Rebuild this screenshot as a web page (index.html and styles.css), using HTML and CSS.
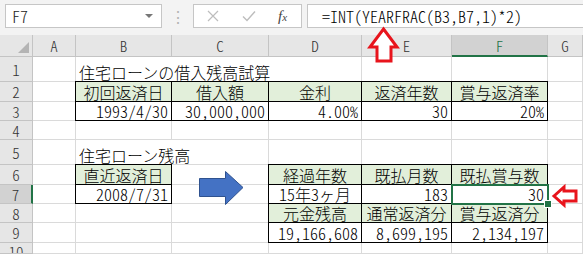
FILE: index.html
```html
<!DOCTYPE html>
<html lang="ja">
<head>
    <meta charset="UTF-8">
    <title>住宅ローン残高</title>
    <link rel="stylesheet" href="styles.css">
</head>
<body>

    <!-- Formula bar -->
    <div class="topbar">
        <div class="namebox"><span>F7</span><span class="caret"></span></div>
        <div class="dots">⋮</div>
        <div class="fxbox">
            <svg class="ico" width="12" height="12" viewBox="0 0 12 12"><path d="M1 1 L11 11 M11 1 L1 11" stroke="#bdbdbd" stroke-width="1.2" fill="none"/></svg>
            <svg class="ico" width="14" height="12" viewBox="0 0 14 12"><path d="M1 6.5 L5 10.5 L13 1.5" stroke="#bdbdbd" stroke-width="1.4" fill="none"/></svg>
            <span class="fx">f<small>x</small></span>
        </div>
        <div class="formula">=INT(YEARFRAC(B3,B7,1)*2)</div>
    </div>

    <!-- Sheet -->
    <div class="sheet">
        <div class="corner"><span class="tri"></span></div>
        <div class="hd">A</div>
        <div class="hd">B</div>
        <div class="hd">C</div>
        <div class="hd">D</div>
        <div class="hd">E</div>
        <div class="hd active">F</div>
        <div class="hd">G</div>

        <div class="rh">1</div>
        <div class="c"></div>
        <div class="c span3">住宅ローンの借入残高試算</div>
        <div class="c"></div>
        <div class="c"></div>
        <div class="c"></div>

        <div class="rh">2</div>
        <div class="c"></div>
        <div class="c g bd ctr">初回返済日</div>
        <div class="c g bd ctr">借入額</div>
        <div class="c g bd ctr">金利</div>
        <div class="c g bd ctr">返済年数</div>
        <div class="c g bd ctr">賞与返済率</div>
        <div class="c"></div>

        <div class="rh">3</div>
        <div class="c"></div>
        <div class="c bd r">1993/4/30</div>
        <div class="c bd r">30,000,000</div>
        <div class="c bd r">4.00%</div>
        <div class="c bd r">30</div>
        <div class="c bd r">20%</div>
        <div class="c"></div>

        <div class="rh">4</div>
        <div class="c"></div>
        <div class="c"></div>
        <div class="c"></div>
        <div class="c"></div>
        <div class="c"></div>
        <div class="c"></div>
        <div class="c"></div>

        <div class="rh">5</div>
        <div class="c"></div>
        <div class="c span2">住宅ローン残高</div>
        <div class="c"></div>
        <div class="c"></div>
        <div class="c"></div>
        <div class="c"></div>

        <div class="rh">6</div>
        <div class="c"></div>
        <div class="c g bd ctr">直近返済日</div>
        <div class="c"></div>
        <div class="c g bd ctr">経過年数</div>
        <div class="c g bd ctr">既払月数</div>
        <div class="c g bd ctr">既払賞与数</div>
        <div class="c"></div>

        <div class="rh active">7</div>
        <div class="c"></div>
        <div class="c bd r">2008/7/31</div>
        <div class="c"></div>
        <div class="c bd ctr">15年3ヶ月</div>
        <div class="c bd r">183</div>
        <div class="c bd r cur">30<span class="sel"><span class="handle"></span></span></div>
        <div class="c"></div>

        <div class="rh">8</div>
        <div class="c"></div>
        <div class="c"></div>
        <div class="c"></div>
        <div class="c g bd ctr">元金残高</div>
        <div class="c g bd ctr">通常返済分</div>
        <div class="c g bd ctr">賞与返済分</div>
        <div class="c"></div>

        <div class="rh">9</div>
        <div class="c"></div>
        <div class="c"></div>
        <div class="c"></div>
        <div class="c bd r">19,166,608</div>
        <div class="c bd r">8,699,195</div>
        <div class="c bd r">2,134,197</div>
        <div class="c"></div>

        <div class="rh last">10</div>
        <div class="c"></div>
        <div class="c"></div>
        <div class="c"></div>
        <div class="c"></div>
        <div class="c"></div>
        <div class="c"></div>
        <div class="c"></div>
    </div>

    <!-- Shapes drawn over the sheet -->
    <svg class="shapes" width="583" height="254" viewBox="0 0 583 254">
        <path d="M383.5 29 L397 47 L391 47 L391 61 L377 61 L377 47 L370 47 Z" fill="#fff" stroke="#e8141c" stroke-width="3" stroke-linejoin="miter"/>
        <path d="M554 196 L564 187 L564 191 L576 191 L576 201 L564 201 L564 205 Z" fill="#fff" stroke="#e8141c" stroke-width="3" stroke-linejoin="miter"/>
        <path d="M199.5 178.5 L225.5 178.5 L225.5 171.5 L243 187.5 L225.5 204.5 L225.5 196.5 L199.5 196.5 Z" fill="#4472c4" stroke="#2f528f" stroke-width="1"/>
    </svg>

</body>
</html>
```

FILE: styles.css
```css
body {
    margin: 0;
    background-color: #fff;
    font-family: "Noto Sans CJK JP", sans-serif;
    font-feature-settings: "hwid";
    font-weight: 300;
    color: #000;
    position: relative;
    width: 583px;
    height: 254px;
    overflow: hidden;
}

/* Formula bar */
.topbar {
    height: 35px;
    box-sizing: border-box;
    padding: 4px 0 0 5px;
    background-color: #f3f3f3;
    display: flex;
    align-items: flex-start;
}

.namebox {
    width: 157px;
    height: 24px;
    box-sizing: border-box;
    border: 1px solid #c6c6c6;
    background-color: #fff;
    display: flex;
    align-items: center;
    justify-content: space-between;
    padding: 0 6px 0 6px;
    font-size: 16px;
    line-height: 18px;
    color: #222;
}

.caret {
    width: 0;
    height: 0;
    border-left: 4px solid transparent;
    border-right: 4px solid transparent;
    border-top: 4px solid #777;
    margin-right: 2px;
}

.dots {
    width: 31px;
    height: 24px;
    line-height: 24px;
    text-align: center;
    color: #b4b4b4;
    font-size: 16px;
}

.fxbox {
    width: 109px;
    height: 24px;
    box-sizing: border-box;
    border: 1px solid #c6c6c6;
    background-color: #fff;
    display: flex;
    align-items: center;
    padding-left: 13px;
    gap: 23px;
}

.fx {
    font-family: "Liberation Serif", serif;
    font-style: italic;
    font-weight: 400;
    font-size: 15px;
    line-height: 16px;
    color: #444;
    margin-left: -1px;
}

.fx small {
    font-size: 11px;
}

.formula {
    flex: 1;
    margin-left: 5px;
    height: 24px;
    box-sizing: border-box;
    border: 1px solid #c6c6c6;
    border-right: none;
    background-color: #fff;
    padding-left: 14px;
    font-size: 16px;
    line-height: 22px;
    white-space: nowrap;
}

/* Sheet grid */
.sheet {
    display: grid;
    grid-template-columns: 33px 43px 96px 97px 93px 90px 96px 35px;
    grid-template-rows: 22px 25px 20px 19px 19px 25px 20px 19px 19px 20px 11px;
}

.corner,
.hd,
.rh {
    background-color: #e6e6e6;
    box-sizing: border-box;
    border-right: 1px solid #c4c4c4;
    border-bottom: 1px solid #c4c4c4;
    color: #333;
    font-size: 15px;
    line-height: 15px;
    display: flex;
    align-items: center;
    justify-content: center;
}

.rh.last {
    align-items: flex-start;
    padding-top: 1px;
    overflow: hidden;
}

.corner {
    position: relative;
}

.tri {
    position: absolute;
    right: 3px;
    bottom: 3px;
    width: 0;
    height: 0;
    border-left: 11px solid transparent;
    border-bottom: 11px solid #b4b4b4;
}

.hd.active {
    background-color: #d2d2d2;
    color: #217346;
    border-bottom: 2px solid #217346;
}

.rh.active {
    background-color: #d2d2d2;
    border-right: 2px solid #217346;
}

.c {
    box-sizing: border-box;
    border-right: 1px solid #dadada;
    border-bottom: 1px solid #dadada;
    display: flex;
    align-items: flex-end;
    padding: 0 3px 1px 3px;
    font-size: 16px;
    line-height: 16px;
    white-space: nowrap;
}

.span2 {
    grid-column: span 2;
}

.span3 {
    grid-column: span 3;
}

.g {
    background-color: #e2efda;
}

.bd {
    border: 1px solid #000;
    margin: -1px 0 0 -1px;
}

.ctr {
    justify-content: center;
}

.r {
    justify-content: flex-end;
}

/* Active cell F7 */
.cur {
    position: relative;
}

.sel {
    position: absolute;
    left: -1px;
    top: -1px;
    right: -2px;
    bottom: -2px;
    border: 2px solid #217346;
}

.handle {
    position: absolute;
    right: -5px;
    bottom: -5px;
    width: 6px;
    height: 6px;
    background-color: #217346;
    border: 1px solid #fff;
}

.shapes {
    position: absolute;
    left: 0;
    top: 0;
    pointer-events: none;
}
```
